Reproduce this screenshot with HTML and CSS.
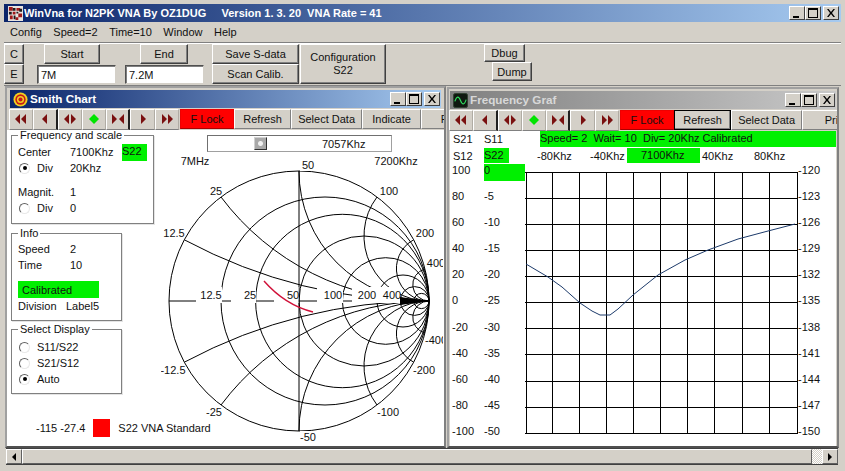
FILE: index.html
```html
<!DOCTYPE html>
<html lang="en">
<head>
<meta charset="utf-8">
<title>WinVna</title>
<link rel="stylesheet" href="styles.css">
</head>
<body>
<svg class="sprite" aria-hidden="true">
  <symbol id="dl" viewBox="0 0 16 12"><path d="M7 1 2 6l5 5zM13 1 8 6l5 5z"/></symbol>
  <symbol id="l" viewBox="0 0 16 12"><path d="M10 1 5 6l5 5z"/></symbol>
  <symbol id="split" viewBox="0 0 16 12"><path d="M7 1 2 6l5 5zM9 1l5 5-5 5z"/></symbol>
  <symbol id="dia" viewBox="0 0 16 12"><path d="M8 1l5 5-5 5-5-5z" fill="#00e400"/></symbol>
  <symbol id="conv" viewBox="0 0 16 12"><path d="M2 1l5 5-5 5zM14 1 9 6l5 5z"/></symbol>
  <symbol id="r" viewBox="0 0 16 12"><path d="M6 1l5 5-5 5z"/></symbol>
  <symbol id="dr" viewBox="0 0 16 12"><path d="M3 1l5 5-5 5zM9 1l5 5-5 5z"/></symbol>
  <symbol id="min" viewBox="0 0 14 12"><path d="M3 9h6v2H3z"/></symbol>
  <symbol id="max" viewBox="0 0 14 12"><path d="M2 1h10v10H2zM3 3v7h8V3z" fill-rule="evenodd"/></symbol>
  <symbol id="close" viewBox="0 0 14 12"><path d="M3 2h1.6L7 5l2.4-3H11L8 6l3 4H9.400L7 7l-2.400 3H3l3-4z"/></symbol>
</svg>

<div class="app">
  <header class="titlebar mainbar">
    <svg class="ticon" viewBox="0 0 16 16"><rect width="16" height="16" fill="#e8e4e0"/><path d="M1 1h4v4H1zM9 2h4v3H9zM5 6h3v3H5zM11 8h4v4h-4zM2 10h3v4H2zM8 12h3v3H8z" fill="#a01818"/><path d="M5 2h3v3H5zM1 6h3v3H1zM9 6h2v2H9zM6 10h2v4H6zM12 3h3v3h-3z" fill="#201818"/></svg>
    <span class="ttext">WinVna for N2PK VNA By OZ1DUG     Version 1. 3. 20  VNA Rate = 41</span>
    <span class="wctl"><button class="wbtn"><svg><use href="#min"/></svg></button><button class="wbtn"><svg><use href="#max"/></svg></button><button class="wbtn wclose"><svg><use href="#close"/></svg></button></span>
  </header>
  <nav class="menu"><span>Config</span><span>Speed=2</span><span>Time=10</span><span>Window</span><span>Help</span></nav>
  <section class="tools">
    <div class="col ce"><button class="btn h20">C</button><button class="btn h20">E</button></div>
    <div class="col se se-start"><button class="btn h20 bstart">Start</button><input class="field" value="7M"></div>
    <div class="col se se-end"><button class="btn h20 bend">End</button><input class="field" value="7.2M"></div>
    <div class="col save"><button class="btn h20">Save S-data</button><button class="btn h20">Scan Calib.</button></div>
    <button class="btn config">Configuration<br>S22</button>
    <div class="col dbg"><button class="btn dbug">Dbug</button><button class="btn dump">Dump</button></div>
  </section>

  <main class="mdi">
    <article class="win smith">
      <header class="titlebar childbar">
        <svg class="ticon" viewBox="0 0 16 16"><circle cx="8" cy="8" r="7.5" fill="#f0d020"/><circle cx="8" cy="8" r="5.5" fill="#c81818"/><circle cx="8" cy="8" r="3.8" fill="#f0d020"/><circle cx="8" cy="8" r="2.2" fill="#c81818"/></svg>
        <span class="ttext">Smith Chart</span>
        <span class="wctl"><button class="wbtn"><svg><use href="#min"/></svg></button><button class="wbtn"><svg><use href="#max"/></svg></button><button class="wbtn wclose"><svg><use href="#close"/></svg></button></span>
      </header>
      <div class="wtools">
        <button class="nav"><svg><use href="#dl"/></svg></button><button class="nav sep"><svg><use href="#l"/></svg></button><button class="nav"><svg><use href="#split"/></svg></button><button class="nav"><svg><use href="#dia"/></svg></button><button class="nav sep"><svg><use href="#conv"/></svg></button><button class="nav"><svg><use href="#r"/></svg></button><button class="nav"><svg><use href="#dr"/></svg></button>
        <button class="tb lock">F Lock</button><button class="tb refresh">Refresh</button><button class="tb sel">Select Data</button><button class="tb ind">Indicate</button><button class="tb print">Print</button>
      </div>
      <div class="client smith-client">
        <div class="side">
          <section class="group g-freq">
            <span class="gtitle">Frequency and scale</span>
            <div class="row"><span class="k">Center</span><span class="v">7100Khz</span><span class="tag">S22</span></div>
            <div class="row"><span class="k"><i class="radio on"></i>Div</span><span class="v">20Khz</span></div>
            <div class="row gap"><span class="k">Magnit.</span><span class="v">1</span></div>
            <div class="row"><span class="k"><i class="radio"></i>Div</span><span class="v">0</span></div>
          </section>
          <section class="group g-info">
            <span class="gtitle">Info</span>
            <div class="row"><span class="k">Speed</span><span class="v">2</span></div>
            <div class="row"><span class="k">Time</span><span class="v">10</span></div>
            <div class="row gap calib">Calibrated</div>
            <div class="row"><span class="k k-div">Division</span><span class="v">Label5</span></div>
          </section>
          <section class="group g-sel">
            <span class="gtitle">Select Display</span>
            <div class="row"><i class="radio"></i>S11/S22</div>
            <div class="row"><i class="radio"></i>S21/S12</div>
            <div class="row"><i class="radio on"></i>Auto</div>
          </section>
          <div class="status"><span>-115 -27.4</span><i class="swatch"></i><span>S22 VNA Standard</span></div>
        </div>
        <div class="chart">
          <div class="slider"><i class="thumb"></i><span>7057Khz</span></div>
          <svg class="smith-svg" viewBox="161 152 282 295">
            <g class="ln">
              <circle cx="299" cy="301" r="130"/>
              <circle cx="325" cy="301" r="104"/>
              <circle cx="342.3" cy="301" r="86.7"/>
              <circle cx="364" cy="301" r="65"/>
              <circle cx="385.7" cy="301" r="43.3"/>
              <circle cx="403" cy="301" r="26"/>
              <circle cx="414.6" cy="301" r="14.4"/>
              <circle cx="421.4" cy="301" r="7.6"/>
              <path d="M299 171V431M169 301H429"/>
              <path d="M184.3 239.8A520 520 0 0 0 429 301M184.3 362.2A520 520 0 0 1 429 301"/>
              <path d="M221 197A260 260 0 0 0 429 301M221 405A260 260 0 0 1 429 301"/>
              <path d="M299 171A130 130 0 0 0 429 301M299 431A130 130 0 0 1 429 301"/>
              <path d="M377 197A65 65 0 0 0 429 301M377 405A65 65 0 0 1 429 301"/>
              <path d="M413.7 239.8A32.5 32.5 0 0 0 429 301M413.7 362.2A32.5 32.5 0 0 1 429 301"/>
              <path d="M425 269A16.25 16.25 0 0 0 429 301M425 333A16.25 16.25 0 0 1 429 301"/>
            </g>
            <path d="M400 297 429 301 400 305z" fill="#000"/>
            <g class="mask">
              <rect x="196" y="287" width="26" height="16"/><rect x="231" y="287" width="25" height="16"/><rect x="274" y="287" width="24.500" height="16"/><rect x="317" y="287" width="26" height="16"/><rect x="352" y="287" width="25" height="16"/><rect x="377" y="287" width="23" height="16"/>
              <rect x="300" y="157" width="16" height="14"/><rect x="300" y="431" width="16" height="14"/>
            </g>
            <path class="trace-red" d="M264 281Q285 305 313 312"/>
            <g class="st">
              <text x="195" y="165">7MHz</text><text x="396" y="165">7200Khz</text>
              <text x="308" y="169">50</text><text x="216" y="195">25</text><text x="174" y="237">12.5</text>
              <text x="211" y="299">12.5</text><text x="250" y="299">25</text><text x="293" y="299">50</text><text x="333" y="299">100</text><text x="367" y="299">200</text><text x="392" y="299">400</text>
              <text x="389" y="195">100</text><text x="425" y="237">200</text><text x="436" y="267">400</text>
              <text x="436" y="344">-400</text><text x="424" y="374">-200</text><text x="388" y="416">-100</text>
              <text x="214" y="416">-25</text><text x="173" y="374">-12.5</text><text x="308" y="441">-50</text>
            </g>
          </svg>
        </div>
      </div>
    </article>

    <article class="win freq">
      <header class="titlebar childbar inactive">
        <svg class="ticon" viewBox="0 0 16 16"><rect x=".5" y=".5" width="15" height="15" rx="2" fill="#101810" stroke="#304030"/><path d="M2 9C4 3 6 3 8 8s4 5 6-1" fill="none" stroke="#30e060" stroke-width="1.2"/></svg>
        <span class="ttext">Frequency Graf</span>
        <span class="wctl"><button class="wbtn"><svg><use href="#min"/></svg></button><button class="wbtn"><svg><use href="#max"/></svg></button><button class="wbtn wclose"><svg><use href="#close"/></svg></button></span>
      </header>
      <div class="wtools">
        <button class="nav"><svg><use href="#dl"/></svg></button><button class="nav sep"><svg><use href="#l"/></svg></button><button class="nav"><svg><use href="#split"/></svg></button><button class="nav"><svg><use href="#dia"/></svg></button><button class="nav sep"><svg><use href="#conv"/></svg></button><button class="nav"><svg><use href="#r"/></svg></button><button class="nav"><svg><use href="#dr"/></svg></button>
        <button class="tb lock">F Lock</button><button class="tb refresh focus">Refresh</button><button class="tb sel">Select Data</button><button class="tb print print-f">Print</button>
      </div>
      <div class="client freq-client">
        <div class="frow r1"><span class="c1">S21</span><span class="c2">S11</span><span class="fbar">Speed= 2  Wait= 10  Div= 20Khz Calibrated</span></div>
        <div class="frow r2"><span class="c1">S12</span><span class="c2b"><b class="s22">S22</b></span><span class="a1">-80Khz</span><span class="a2">-40Khz</span><span class="mid">7100Khz</span><span class="a3">40Khz</span><span>80Khz</span></div>
        <div class="plot">
          <div class="scale c-a"><span>100</span><span>80</span><span>60</span><span>40</span><span>20</span><span>0</span><span>-20</span><span>-40</span><span>-60</span><span>-80</span><span>-100</span></div>
          <div class="scale c-b"><span class="zero">0</span><span>-5</span><span>-10</span><span>-15</span><span>-20</span><span>-25</span><span>-30</span><span>-35</span><span>-40</span><span>-45</span><span>-50</span></div>
          <svg class="grid-svg" viewBox="525 163 273 275">
            <path class="gl" d="M526 171V432M552 171V432M579 171V432M606 171V432M633 171V432M660 171V432M687 171V432M714 171V432M742 171V432M769 171V432M797 171V432M525 171H798M525 197H798M525 223H798M525 249H798M525 275H798M525 301H798M525 327H798M525 353H798M525 380H798M525 406H798M525 432H798"/>
            <path class="trace-blue" d="M526 263 548 276 562 286 580 302 592 310 600 314 610 314 618 308 633 294 658 274 685 259 708 249 738 238 768 230 795 223"/>
          </svg>
          <div class="scale c-c"><span>-120</span><span>-123</span><span>-126</span><span>-129</span><span>-132</span><span>-135</span><span>-138</span><span>-141</span><span>-144</span><span>-147</span><span>-150</span></div>
        </div>
      </div>
    </article>
  </main>

  <footer class="hscroll">
    <button class="sbtn"><svg viewBox="0 0 8 8"><path d="M6 0 2 4l4 4z"/></svg></button>
    <div class="sthumb"></div>
    <div class="strack"></div>
    <button class="sbtn"><svg viewBox="0 0 8 8"><path d="M2 0l4 4-4 4z"/></svg></button>
  </footer>
</div>
</body>
</html>
```
FILE: styles.css
```css
* { box-sizing: border-box; }
html, body { margin: 0; padding: 0; }
body {
  width: 845px; height: 471px; overflow: hidden;
  background: #d4d0c8; color: #111;
  font: 11px/14px "Liberation Sans", Arial, sans-serif;
}
.sprite { width: 0; height: 0; position: absolute; }
button { font: inherit; color: inherit; padding: 0; margin: 0; background: #d4d0c8; }
.app { display: flex; flex-direction: column; height: 471px; padding: 4px 4px 6px; }

.titlebar { display: flex; align-items: center; color: #fff; font: bold 11.700px/14px "Liberation Sans", Arial, sans-serif; white-space: pre; background: linear-gradient(90deg, #0a246a, #a6caf0); }
.mainbar { height: 18px; padding: 0 2px 0 4px; flex: none; font-size: 11px; }
.mainbar .ttext { margin-left: 1px; }
.ticon { width: 15px; height: 15px; flex: none; }
.wctl { margin-left: auto; display: flex; }
.wbtn { width: 16px; height: 14px; border: 1px solid; border-color: #fff #404040 #404040 #fff; display: flex; align-items: center; justify-content: center; }
.wbtn svg { width: 14px; height: 12px; }
.wclose { margin-left: 2px; }

.menu { height: 21px; flex: none; display: flex; align-items: center; padding-left: 6px; gap: 11.500px; border-bottom: 1px solid #808080; box-shadow: 0 1px 0 #fff; }

.tools { height: 42px; flex: none; display: flex; padding-top: 1px; }
.col { display: flex; flex-direction: column; }
.btn { border: 1px solid; border-color: #fff #404040 #404040 #fff; box-shadow: inset -1px -1px 0 #808080; }
.h20 { height: 20px; flex: none; }
.ce { width: 20px; }
.se-start { width: 79px; margin-left: 13px; }
.se-end { width: 79px; margin-left: 9px; }
.bstart { width: 56px; margin-left: 7px; }
.bend { width: 48px; margin-left: 15px; }
.field { width: 79px; height: 19px; margin-top: 1px; font: inherit; padding: 0 3px; background: #fff; color: #111; border: 1px solid; border-color: #505050 #d4d0c8 #d4d0c8 #505050; box-shadow: inset 1px 1px 0 #808080; outline: 0; }
.save { width: 87px; margin-left: 8px; }
.config { width: 86px; height: 40px; margin-left: 1px; line-height: 13px; }
.dbg { margin-left: 98px; }
.dbug { width: 41px; height: 18px; }
.dump { width: 40px; height: 19px; margin-left: 8px; }

.mdi { position: relative; flex: 1; border-top: 1px solid #808080; }
.win { position: absolute; display: flex; flex-direction: column; border: 2px solid; border-color: #a0a0a0 #808080 #505050 #a0a0a0; }
.smith { left: 1px; top: 0; width: 441px; height: 362px; }
.freq { left: 443px; top: 1px; width: 392px; height: 361px; }
.childbar { height: 18px; margin: 2px 3px 0; padding: 0 1px 0 3px; flex: none; }
.freq .childbar { margin: 2px 1px 0; }
.childbar .ttext { margin-left: 2px; }
.inactive { background: linear-gradient(90deg, #808080, #c8c8c8); color: #d8d8d8; }

.wtools { height: 22px; flex: none; display: flex; overflow: hidden; align-items: center; }
.smith .wtools { padding-left: 2px; }
.nav { width: 24.3px; height: 21px; flex: none; border: 1px solid; border-color: #fff #b0aca4 #808080 #fff; display: flex; align-items: center; justify-content: center; }
.nav svg { width: 16px; height: 12px; fill: #7a1010; }
.sep { border-right: 2px solid #202020; }
.tb { height: 20px; flex: none; border: 1px solid; border-color: #fff #808080 #808080 #fff; }
.lock { width: 54px; margin-left: 1px; background: #f00; border-color: #e00 #e00 #a00 #e00; }
.refresh { width: 57px; }
.focus { border: 1px solid #000; box-shadow: inset -1px -1px 0 #808080; }
.sel { width: 71px; }
.ind { width: 59px; }
.print { width: 62px; }
.print-f { width: 68px; }

.client { flex: 1; background: #fff; min-height: 0; overflow: hidden; }
.smith-client { display: flex; position: relative; }
.side { width: 154px; flex: none; padding: 5px 0 0 4px; }
.group { position: relative; border: 1px solid #808080; box-shadow: 1px 1px 0 #e4e4e4; padding-left: 6px; }
.gtitle { position: absolute; top: -8px; left: 6px; padding: 0 2px; background: #fff; white-space: nowrap; }
.row { height: 16px; display: flex; align-items: center; white-space: nowrap; }
.gap { margin-top: 8px; }
.k { width: 52px; display: flex; align-items: center; flex: none; }
.k-div { width: 48px; }
.v { width: 52px; flex: none; }
.tag { width: 25px; height: 17px; background: #00f000; }
.g-freq { width: 143px; height: 89px; padding-top: 8px; }
.g-info { width: 111px; height: 88px; margin-top: 9px; padding-top: 7px; }
.g-sel { width: 111px; height: 65px; margin-top: 8px; padding-top: 9px; }
.calib { width: 81px; background: #00f000; padding-left: 4px; height: 17px; }
.radio { width: 11px; height: 11px; flex: none; margin: 0 7px 0 1px; border-radius: 50%; border: 1px solid; border-color: #606060 #e8e8e8 #e8e8e8 #606060; background: #fff; position: relative; }
.radio.on::after { content: ""; position: absolute; left: 2.5px; top: 2.5px; width: 4px; height: 4px; border-radius: 50%; background: #000; }
.status { display: flex; align-items: center; height: 18px; margin: 25px 0 0 25px; white-space: nowrap; position: relative; z-index: 2; }
.swatch { width: 17px; height: 18px; background: #f00; margin: 0 8px; flex: none; }

.chart { flex: 1; min-width: 0; display: flex; flex-direction: column; }
.slider { width: 185px; height: 17px; margin: 5px 0 0 46px; flex: none; display: flex; align-items: center; border: 1px solid; border-color: #707070 #a0a0a0 #a0a0a0 #707070; padding-left: 46px; }
.thumb { width: 13px; height: 13px; flex: none; margin-right: 55px; background: radial-gradient(circle, #f0f0f0 0 2px, #a8a8a8 3px); border: 1px solid; border-color: #d0d0d0 #303030 #303030 #d0d0d0; }
.smith-svg { width: 282px; height: 295px; flex: none; display: block; }
.ln { fill: none; stroke: #000; stroke-width: 1; }
.mask { fill: #fff; }
.trace-red { fill: none; stroke: #d01038; stroke-width: 1.4; }
.st { font: 11px "Liberation Sans", Arial, sans-serif; fill: #111; text-anchor: middle; }

.freq-client { display: flex; flex-direction: column; margin-left: 1px; margin-right: 1px; }
.frow { display: flex; align-items: center; white-space: pre; flex: none; }
.r1 { height: 16px; }
.r2 { height: 17px; }
.c1 { width: 34px; padding-left: 3px; flex: none; }
.c2 { width: 56px; flex: none; }
.c2b { width: 53px; flex: none; }
.s22 { display: block; width: 25px; height: 15px; font-weight: normal; background: #00f000; }
.fbar { flex: 1; height: 16px; background: #00f000; }
.a1 { width: 53px; }
.a2 { width: 37px; }
.mid { width: 73px; height: 15px; padding-left: 14px; background: #00f000; }
.a3 { width: 54px; padding-left: 2px; }
.plot { display: flex; flex: 1; min-height: 0; }
.scale { flex: none; display: grid; grid-auto-rows: 26.1px; align-content: start; }
.scale span { height: 17px; line-height: 13px; }
.c-a { width: 34px; padding-left: 2px; }
.c-b { width: 41px; }
.zero { background: #00f000; }
.grid-svg { width: 273px; height: 275px; flex: none; display: block; }
.gl { fill: none; stroke: #000; stroke-width: 1; shape-rendering: crispEdges; }
.trace-blue { fill: none; stroke: #1c3a6a; stroke-width: 1; }

.hscroll { height: 17px; flex: none; margin: 0 3px 0 2px; display: flex; border-top: 1px solid #404040; border-bottom: 1px solid #404040; }
.sbtn { width: 16px; flex: none; border: 1px solid; border-color: #fff #606060 #606060 #fff; display: flex; align-items: center; justify-content: center; }
.sbtn svg { width: 8px; height: 8px; }
.sthumb { flex: 1; border: 1px solid; border-color: #fff #606060 #606060 #fff; }
.strack { width: 10px; flex: none; background: repeating-conic-gradient(#fff 0 25%, #d4d0c8 0 50%) 0 0 / 2px 2px; }
```
